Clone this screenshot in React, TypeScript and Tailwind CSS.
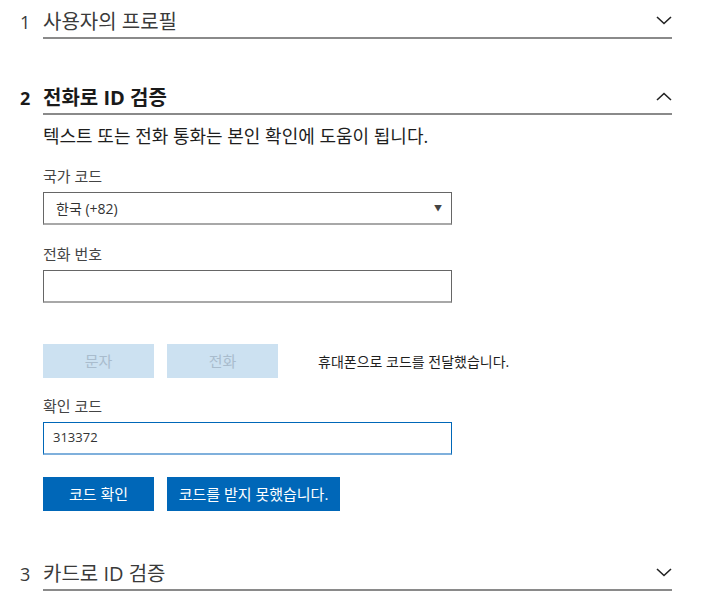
import React from "react";

const font = { fontFamily: '"Open Sans", "Noto Sans CJK KR", sans-serif' };

function ChevronDown() {
  return (
    <svg width="16" height="9" viewBox="0 0 16 9" className="block">
      <path d="M1 1 L8 7.5 L15 1" fill="none" stroke="#222" strokeWidth="1.6" />
    </svg>
  );
}
function ChevronUp() {
  return (
    <svg width="16" height="9" viewBox="0 0 16 9" className="block">
      <path d="M1 8 L8 1.5 L15 8" fill="none" stroke="#222" strokeWidth="1.6" />
    </svg>
  );
}

function Header({ n, title, open, className }: { n: string; title: string; open?: boolean; className?: string }) {
  return (
    <div className={"flex " + (className || "")}>
      <div className={"w-[23px] pt-[10px] text-[18px] leading-[24px] " + (open ? "font-bold text-[#1a1a1a]" : "text-[#3a3a3a]")}>{n}</div>
      <div className="flex-1 flex items-start justify-between border-b-2 border-[#8a8a8a] pt-[10px] pb-[3px]">
        <span className={"text-[20px] leading-[24px] " + (open ? "font-bold text-[#1a1a1a]" : "text-[#3a3a3a]")}>{title}</span>
        <div className="pt-[6px]">{open ? <ChevronUp /> : <ChevronDown />}</div>
      </div>
    </div>
  );
}

export default function App() {
  return (
    <div className="w-[705px] h-[616px] bg-white pl-[20px] pr-[33px]" style={font}>
      <Header n="1" title="사용자의 프로필" />
      <Header n="2" title="전화로 ID 검증" open className="mt-[37px]" />
      <div className="pl-[23px]">
        <p className="mt-[11px] text-[18px] leading-[20px] text-[#1e1e1e]">텍스트 또는 전화 통화는 본인 확인에 도움이 됩니다.</p>
        <div className="mt-[20px] text-[15px] leading-[20px] text-[#444]">국가 코드</div>
        <div className="mt-[6px] w-[409px] h-[33px] border border-[#666] border-b-2 border-b-[#a8a8a8] flex items-center justify-between pl-[12px] pr-[9px]">
          <span className="text-[14px] text-[#333]">한국 (+82)</span>
          <span className="text-[8px] text-[#444]">▼</span>
        </div>
        <div className="mt-[19px] text-[15px] leading-[20px] text-[#444]">전화 번호</div>
        <div className="mt-[6px] w-[409px] h-[33px] border border-[#666] border-b-2 border-b-[#a8a8a8]" />
        <div className="mt-[41px] flex items-center">
          <div className="w-[111px] h-[34px] bg-[#cce1f1] flex items-center justify-center text-[15px] text-[#a9bccd]">문자</div>
          <div className="ml-[13px] w-[111px] h-[34px] bg-[#cce1f1] flex items-center justify-center text-[15px] text-[#a9bccd]">전화</div>
          <div className="ml-[40px] text-[14px] text-[#1e1e1e]">휴대폰으로 코드를 전달했습니다.</div>
        </div>
        <div className="mt-[18px] text-[15px] leading-[20px] text-[#444]">확인 코드</div>
        <div className="mt-[6px] w-[409px] h-[33px] border border-[#0067b8] border-b-2 border-b-[#7fb0dc] flex items-center pl-[9px]">
          <span className="text-[13px] text-[#333]">313372</span>
        </div>
        <div className="mt-[22px] flex">
          <div className="w-[111px] h-[34px] bg-[#0067b8] flex items-center justify-center text-[15px] text-white">코드 확인</div>
          <div className="ml-[13px] w-[173px] h-[34px] bg-[#0067b8] flex items-center justify-center text-[15px] text-white">코드를 받지 못했습니다.</div>
        </div>
      </div>
      <Header n="3" title="카드로 ID 검증" className="mt-[41px]" />
    </div>
  );
}
